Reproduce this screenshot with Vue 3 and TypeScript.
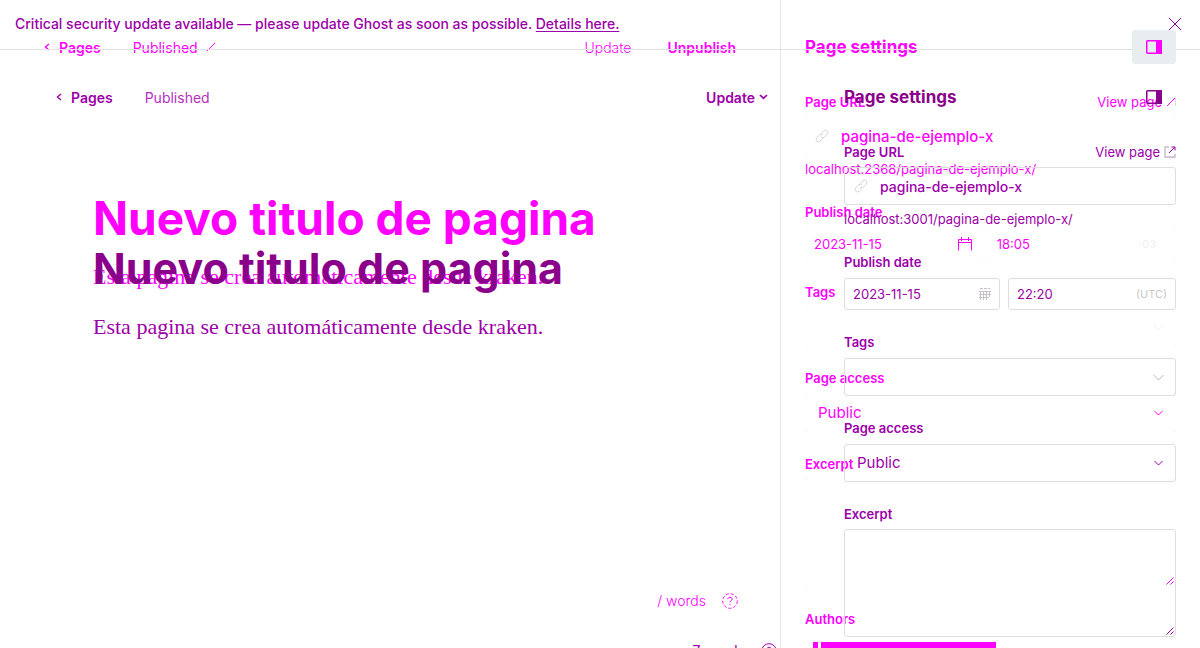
<script setup lang="ts">
import { ref } from 'vue'

interface Snapshot {
  id: string
  kind: 'before' | 'after'
  banner: boolean
  url: string
  host: string
  date: string
  time: string
  zone: string
  words: string
}

const snapshots = ref<Snapshot[]>([
  {
    id: 'a', kind: 'before', banner: false,
    url: 'pagina-de-ejemplo-x', host: 'localhost.2368/pagina-de-ejemplo-x/',
    date: '2023-11-15', time: '18:05', zone: '-03', words: '/ words',
  },
  {
    id: 'b', kind: 'after', banner: true,
    url: 'pagina-de-ejemplo-x', host: 'localhost:3001/pagina-de-ejemplo-x/',
    date: '2023-11-15', time: '22:20', zone: '(UTC)', words: '7 words',
  },
])
</script>

<template>
  <div class="stack">
    <div v-for="s in snapshots" :key="s.id" class="screen" :class="s.kind">
      <div v-if="s.banner" class="banner">
        <span>Critical security update available — please update Ghost as soon as possible. <a href="#">Details here.</a></span>
        <button class="plain" aria-label="Close">
          <svg width="14" height="14" viewBox="0 0 14 14"><path d="M1 1l12 12M13 1L1 13" /></svg>
        </button>
      </div>
      <div class="columns">
        <main class="editor">
          <header class="toolbar">
            <a href="#" class="back">
              <svg width="6" height="8" viewBox="0 0 6 8"><path d="M5 1L1.5 4L5 7" stroke-width="1.4" /></svg>
              Pages
            </a>
            <span class="status">Published
              <svg v-if="s.kind === 'before'" width="10" height="10" viewBox="0 0 10 10"><path d="M1 9L9 1" /></svg>
            </span>
            <div class="actions">
              <template v-if="s.kind === 'before'">
                <button class="plain light">Update</button>
                <button class="plain strong">Unpublish</button>
              </template>
              <button v-else class="plain strong">Update
                <svg width="9" height="6" viewBox="0 0 9 6"><path d="M1 1L4.500 4.300L8 1" stroke-width="1.700" /></svg>
              </button>
            </div>
          </header>
          <article>
            <h1>Nuevo titulo de pagina</h1>
            <p>Esta pagina se crea automáticamente desde kraken.</p>
          </article>
          <footer class="count">
            <span>{{ s.words }}</span>
            <button class="plain" aria-label="Help">
              <svg width="16" height="16" viewBox="0 0 16 16">
                <circle cx="8" cy="8" r="7.300" :stroke-dasharray="s.kind === 'before' ? '3 2' : undefined" />
                <path d="M5.800 6.200c.2-2.800 4.600-2.400 4.400 0c-.1 1.500-2.200 1.400-2.200 3.200M8 11.200v1" />
              </svg>
            </button>
          </footer>
        </main>

        <aside class="settings">
          <header class="head">
            <h2>Page settings</h2>
            <button class="toggle" aria-label="Toggle settings">
              <svg width="16" height="14" viewBox="0 0 16 14">
                <rect x="0.750" y="0.750" width="14.500" height="12.500" rx="1" stroke-width="1.500" />
                <path d="M10 0h6v14h-6z" fill="currentColor" stroke="none" />
              </svg>
            </button>
          </header>

          <section class="group">
            <div class="row">
              <label :for="'url-' + s.id">Page URL</label>
              <a href="#" class="view">View page
                <svg v-if="s.kind === 'before'" width="10" height="10" viewBox="0 0 10 10"><path d="M1 1H9.500V9" stroke="#dcdcdc" /><path d="M1 9L9 1" /></svg>
                <svg v-else width="12" height="12" viewBox="0 0 12 12"><path d="M5 1H1V11H11V8" stroke="#c4b8c4" stroke-width="1.300" /><path d="M5 7L11 1M7.500 1H11V4.500" /></svg>
              </a>
            </div>
            <div class="control">
              <svg class="link" width="14" height="14" viewBox="0 0 14 14">
                <path d="M6 4.500L8.700 1.800a2.400 2.400 0 0 1 3.500 3.500L9.500 8a2.400 2.400 0 0 1-3.500 0M8 9.500L5.300 12.200a2.400 2.400 0 0 1-3.500-3.500L4.500 6a2.400 2.400 0 0 1 3.500 0" />
              </svg>
              <input :id="'url-' + s.id" v-model="s.url" class="box url" type="text" />
            </div>
            <p class="host">{{ s.host }}</p>
          </section>

          <section class="group">
            <label :for="'date-' + s.id">Publish date</label>
            <div class="dates">
              <div class="control">
                <input :id="'date-' + s.id" v-model="s.date" class="box small" type="text" />
                <svg v-if="s.kind === 'before'" class="calendar" width="14" height="14" viewBox="0 0 14 14"><path d="M.5 13.500V2.500H13.500V13.500M.5 5.500H13.500M3.500 0V4M10.500 0V4" /></svg>
                <svg v-else class="calendar" width="14" height="14" viewBox="0 0 14 14"><path d="M2 1.500H5M6 1.500H9M10 1.500H12M1 4.500H13M1 7.500H13M1 10.500H11M2.500 4V13M5.500 4V13M8.500 4V13M11.500 4V10" /></svg>
              </div>
              <div class="control">
                <input v-model="s.time" class="box small" type="text" aria-label="Publish time" />
                <span class="zone">{{ s.zone }}</span>
              </div>
            </div>
          </section>

          <section class="group">
            <label :for="'tags-' + s.id">Tags</label>
            <div class="control">
              <input :id="'tags-' + s.id" class="box" type="text" />
              <svg class="chevron pale" width="11" height="7" viewBox="0 0 11 7"><path d="M.5 1L5.500 6L10.500 1" /></svg>
            </div>
          </section>

          <section class="group">
            <label :for="'access-' + s.id">Page access</label>
            <div class="control">
              <select :id="'access-' + s.id" class="box"><option>Public</option></select>
              <svg class="chevron" width="9" height="6" viewBox="0 0 9 6"><path d="M.5 1L4.500 5L8.500 1" /></svg>
            </div>
          </section>

          <section class="group">
            <label :for="'excerpt-' + s.id">Excerpt</label>
            <div class="control excerpt">
              <textarea :id="'excerpt-' + s.id" class="box area"></textarea>
              <svg class="grip" width="8" height="8" viewBox="0 0 8 8"><path d="M.5 7.500L7.500 .5M4.500 7.500L7.500 4.500" /></svg>
            </div>
          </section>

          <section class="group">
            <label :for="'authors-' + s.id">Authors</label>
            <div class="control authors">
              <i class="edge"></i><i class="token"></i>
              <input :id="'authors-' + s.id" class="box" type="text" />
            </div>
          </section>
        </aside>
      </div>
    </div>
  </div>
</template>

<style>
body { background: #fff; }
</style>

<style scoped>
.stack {
  display: grid;
  grid-template-columns: minmax(0, 1fr);
  height: 100vh;
  overflow: hidden;
  background: #fff;
  font-family: Inter, "Liberation Sans", sans-serif;
  font-size: 14px;
}
.stack * { box-sizing: border-box; }
.screen {
  grid-area: 1 / 1;
  display: flex;
  flex-direction: column;
  min-height: 0;
  min-width: 0;
  color: var(--ink);
}
.before { --ink: #f0f; --title: #f0f; --start: 44px; --end: 44px; --inset: 24px; --rim: transparent; }
.after { --ink: #9c00a8; --title: #8b008b; --start: 56px; --end: 12px; --inset: 63px; --rim: #dedede; }
a { color: inherit; text-decoration: none; }
svg { fill: none; stroke: currentColor; stroke-width: 1; flex: none; }
h1, h2, p { margin: 0; }
.plain, .toggle {
  display: flex;
  align-items: center;
  gap: 4px;
  padding: 0;
  border: 0;
  background: none;
  color: inherit;
  font: inherit;
}
.banner {
  display: flex;
  align-items: center;
  justify-content: space-between;
  height: 50px;
  flex: none;
  padding: 0 18px 2px 15px;
  border-bottom: 1px solid #e1e1e1;
  font-weight: 500;
}
.banner a { text-decoration: underline; text-underline-offset: 2px; }
.columns { display: flex; flex: none; height: 100vh; }
.editor {
  flex: 1;
  min-width: 0;
  display: flex;
  flex-direction: column;
}
.toolbar {
  display: flex;
  align-items: center;
  height: 94px;
  padding: 0 var(--end) 0 var(--start);
}
.back { display: flex; align-items: center; gap: 9px; font-weight: 600; }
.status { display: flex; align-items: center; gap: 8px; margin-left: 32px; }
.after .status { color: #b52fc0; }
.actions { display: flex; gap: 36px; margin-left: auto; }
.strong { font-weight: 600; }
.light { font-weight: 300; }
article { padding: 96px 93px 0; }
h1 {
  color: var(--title);
  font-size: 46px;
  line-height: 56px;
  font-weight: 700;
  white-space: nowrap;
}
.after h1 { font-size: 43px; }
article p {
  margin-top: 17px;
  font: 22px/28px "Liberation Serif", serif;
  white-space: nowrap;
}
.count {
  display: flex;
  align-items: center;
  gap: 16px;
  justify-content: flex-end;
  margin-top: auto;
  padding: 0 42px 39px 0;
}
.after .count { padding-right: 3px; }
.before .count { font-weight: 300; }
.settings {
  flex: none;
  width: 35%;
  padding: 30px 24px 0 var(--inset);
  border-left: 1px solid #e5e8eb;
}
.after .settings { border-color: transparent; }
.head { display: flex; align-items: center; justify-content: space-between; height: 34px; margin-bottom: 30px; }
h2 { color: var(--title); font-size: 17px; line-height: 24px; font-weight: 700; }
.toggle { justify-content: center; width: 44px; height: 34px; border-radius: 3px; color: var(--title); }
.before .toggle { position: relative; z-index: 2; background: #e9edf0; }
.after { z-index: 1; }
.group { margin-bottom: 24px; }
.row { display: flex; justify-content: space-between; height: 15px; }
label { display: block; font-size: 13px; line-height: 16px; font-weight: 600; }
.view { display: flex; align-items: center; gap: 4px; font-size: 13px; line-height: 16px; }
.control { position: relative; margin-top: 8px; }
.excerpt { margin-top: 7px; }
.box {
  display: block;
  width: 100%;
  height: 38px;
  margin: 0;
  padding: 0 12px;
  border: 1px solid var(--rim);
  border-radius: 3px;
  outline: 0;
  background: transparent;
  color: inherit;
  font: 15px/20px Inter, sans-serif;
  appearance: none;
  resize: none;
}
.before .box {
  background:
    linear-gradient(#e4e4e4, #e4e4e4) 0 0 / 2px 1px no-repeat border-box,
    linear-gradient(#e4e4e4, #e4e4e4) 100% 0 / 2px 1px no-repeat border-box,
    linear-gradient(#e4e4e4, #e4e4e4) 0 100% / 2px 1px no-repeat border-box,
    linear-gradient(#e4e4e4, #e4e4e4) 100% 100% / 2px 1px no-repeat border-box;
}
.box.url { padding-left: 35px; font-weight: 500; }
.after .url { font-size: 14px; }
.small { height: 32px; padding: 0 8px; font-size: 13px; }
.area { height: 108px; }
.link { position: absolute; left: 10px; top: 12px; color: #d4d4d4; }
.calendar { position: absolute; right: 8px; top: 9px; }
.after .calendar { color: #c9c2c9; }
.zone { position: absolute; right: 9px; top: 9px; font-size: 11px; line-height: 14px; color: #c8c8c8; }
.before .zone { right: 20px; color: #f0f0f0; }
.chevron { position: absolute; right: 13px; top: 16px; }
.pale { right: 12px; color: #bcb4c4; }
.before .pale { color: #f0f0f0; }
.grip { position: absolute; right: 2px; bottom: 2px; }
.host { margin-top: 4px; margin-bottom: 25px; font-size: 13px; line-height: 20px; }
.dates { display: grid; grid-template-columns: 13fr 14fr; gap: 8px; }
.authors { display: flex; }
.edge, .token { flex: none; width: 5px; height: 24px; margin: 7px 0 0 8px; background: var(--ink); }
.token { width: 175px; margin-left: 3px; }
.authors .box { flex: 1; min-width: 0; border-color: transparent; background: none; }
</style>
